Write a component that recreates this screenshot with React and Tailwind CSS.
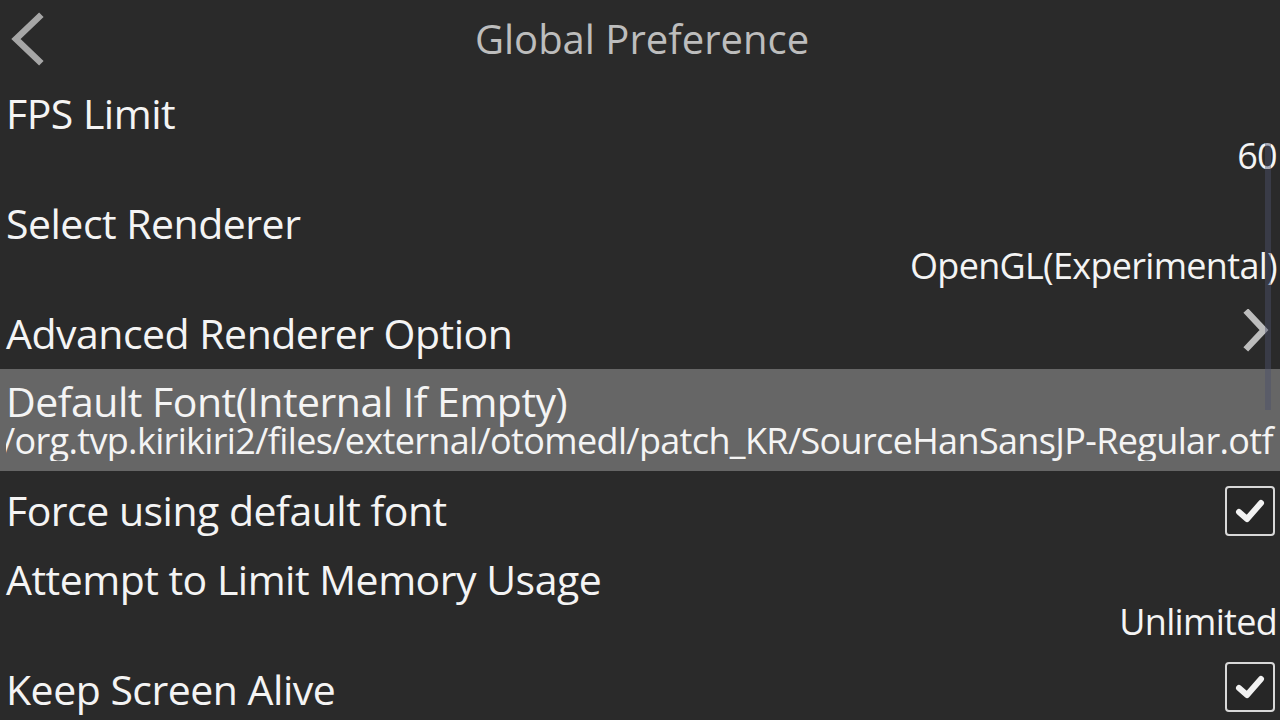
import React from "react";

const font = { fontFamily: '"Open Sans", "Noto Sans", "DejaVu Sans", sans-serif' };

function Check() {
  return (
    <div className="w-[50px] h-[50px] rounded-[4px] border-2 border-[#d8d8d8] bg-[#262626] flex items-center justify-center">
      <svg width="34" height="34" viewBox="0 0 34 34">
        <path d="M6 18 L14 25 L28 9" fill="none" stroke="#f2f2f2" strokeWidth="6" strokeLinecap="round" strokeLinejoin="round" />
      </svg>
    </div>
  );
}

function Title({ children, className = "" }) {
  return <div className={"text-[41px] leading-[40px] tracking-[-0.5px] text-[#f4f4f4] whitespace-nowrap " + className}>{children}</div>;
}

function Value({ children, className = "" }) {
  return <div className={"text-[36px] leading-[40px] tracking-[-0.7px] text-[#f4f4f4] whitespace-nowrap text-right " + className}>{children}</div>;
}

export default function App() {
  return (
    <div className="relative w-[1280px] h-[720px] overflow-hidden bg-[#2a2a2a]" style={font}>
      {/* header */}
      <div className="relative h-[80px] flex items-center justify-center">
        <svg className="absolute left-[8px] top-[10px]" width="40" height="58" viewBox="0 0 40 58">
          <path d="M31 7 L8 29 L31 51" fill="none" stroke="#a6a6a6" strokeWidth="6.5" strokeLinecap="square" />
        </svg>
        <div className="text-[40px] leading-[40px] text-[#bdbdbd] mt-[-2px] ml-[4px]">Global Preference</div>
      </div>

      {/* FPS Limit */}
      <div className="h-[110px] pt-[13px] pl-[6px] pr-[3px]">
        <Title>FPS Limit</Title>
        <Value className="mt-[3px]">60</Value>
      </div>

      {/* Select Renderer */}
      <div className="h-[110px] pt-[13px] pl-[6px] pr-[3px]">
        <Title>Select Renderer</Title>
        <Value className="mt-[3px]">OpenGL(Experimental)</Value>
      </div>

      {/* Advanced */}
      <div className="h-[69px] pt-[13px] pl-[6px] pr-[8px] flex items-start justify-between">
        <Title>Advanced Renderer Option</Title>
        <svg width="30" height="44" viewBox="0 0 30 44" className="mt-[-4px]">
          <path d="M6 4 L22 21 L6 38" fill="none" stroke="#bdbdbd" strokeWidth="6.5" strokeLinecap="square" />
        </svg>
      </div>

      {/* Default Font highlighted */}
      <div className="h-[102px] bg-[#666666] pt-[12px] pl-[6px] overflow-hidden">
        <Title>Default Font(Internal If Empty)</Title>
        <div className="flex justify-end overflow-hidden pr-[7px]">
          <div className="text-[36px] leading-[40px] tracking-[-0.65px] text-[#f4f4f4] whitespace-nowrap">
            /data/data/org.tvp.kirikiri2/files/external/otomedl/patch_KR/SourceHanSansJP-Regular.otf
          </div>
        </div>
      </div>

      {/* Force using default font */}
      <div className="h-[79px] pl-[6px] pr-[5px] flex items-center justify-between">
        <Title className="mt-[-2px]">Force using default font</Title>
        <Check />
      </div>

      {/* Attempt to limit memory */}
      <div className="h-[110px] pt-[9px] pl-[6px] pr-[3px]">
        <Title>Attempt to Limit Memory Usage</Title>
        <Value className="mt-[3px]">Unlimited</Value>
      </div>

      {/* Keep Screen Alive */}
      <div className="h-[79px] pl-[6px] pr-[5px] flex items-start justify-between">
        <Title className="mt-[9px]">Keep Screen Alive</Title>
        <div className="mt-[2px]"><Check /></div>
      </div>

      {/* scrollbar */}
      <div className="absolute left-[1265px] top-[143px] w-[6px] h-[267px] bg-[rgba(75,80,106,0.45)]" />
    </div>
  );
}
